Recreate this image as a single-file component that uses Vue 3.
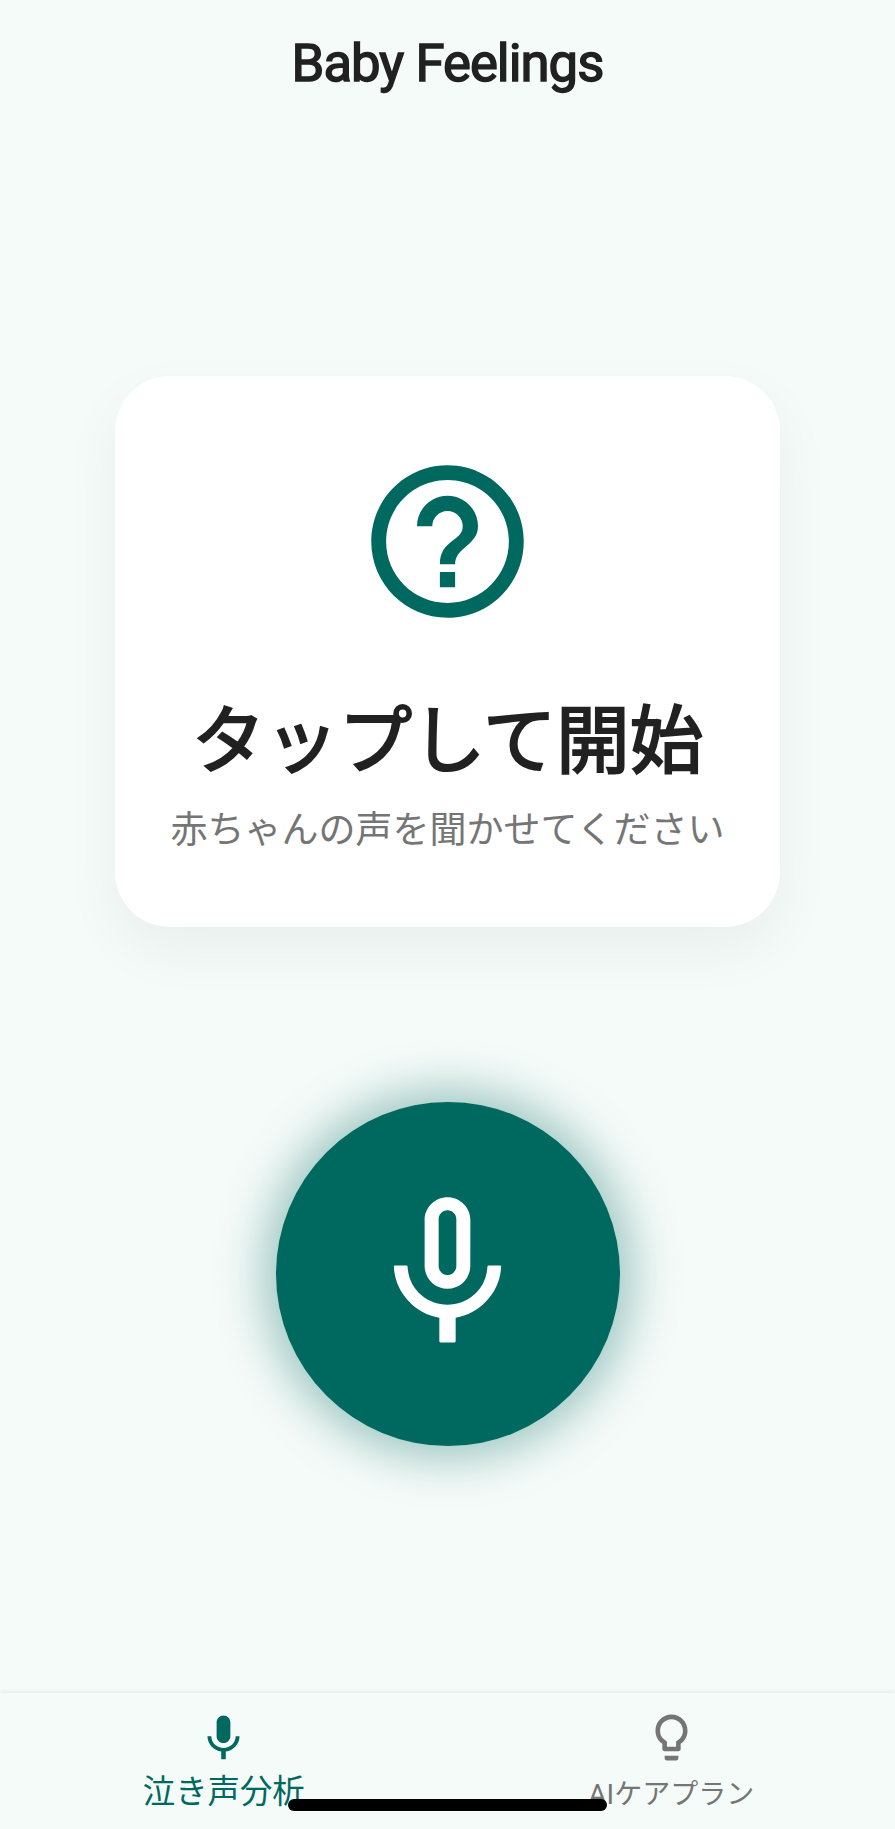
<script setup>
const title = 'Baby Feelings'
const mic = 'M12 14c1.66 0 2.99-1.34 2.99-3L15 5c0-1.66-1.34-3-3-3S9 3.34 9 5v6c0 1.66 1.34 3 3 3z'
const micStand = 'M17.3 11c0 3-2.54 5.1-5.3 5.1S6.7 14 6.7 11H5c0 3.41 2.72 6.23 6 6.72V21h2v-3.28c3.28-.48 6-3.3 6-6.72z'
const roundedStand = 'M17.4 10.95q-.15 0-.17.17C17.1 14.05 14.7 16.1 12 16.1S6.9 14.05 6.77 11.12q-.02-.17-.17-.17H5.1q-.15 0-.13.17C5.1 14.45 7.7 17.25 10.93 17.8V20.9q0 .15.15.15h1.84q.15 0 .15-.15V17.8C16.3 17.25 18.9 14.45 19.03 11.12q.02-.17-.13-.17z'
</script>

<template>
  <div class="screen">
    <header class="bar"><h1>{{ title }}</h1></header>
    <main class="content">
      <section class="card">
        <svg class="big-icon" viewBox="0 0 24 24">
          <path d="M11 18h2v-2h-2v2zm1-16C6.48 2 2 6.48 2 12s4.48 10 10 10 10-4.48 10-10S17.52 2 12 2zm0 18.05c-4.45 0-8.05-3.6-8.05-8.05s3.6-8.05 8.05-8.05 8.05 3.6 8.05 8.05-3.6 8.05-8.05 8.05zm0-14.05c-2.21 0-4 1.79-4 4h2c0-1.1.9-2 2-2s2 .9 2 2c0 2-3 1.75-3 5h2c0-2.25 3-2.5 3-5 0-2.21-1.79-4-4-4z" />
        </svg>
        <h2>タップして開始</h2>
        <p>赤ちゃんの声を聞かせてください</p>
      </section>
      <button class="record" aria-label="録音">
        <svg class="big-icon" viewBox="0 0 24 24">
          <path fill-rule="evenodd" :d="mic + 'M10.84 4.9c0-.66.5-1.2 1.16-1.2s1.16.54 1.16 1.2v6.1c0 .66-.5 1.2-1.16 1.2s-1.16-.54-1.16-1.2z'" />
          <path :d="roundedStand" />
        </svg>
      </button>
    </main>
    <nav class="tabs">
      <div class="tab active">
        <svg viewBox="0 0 24 24"><path :d="mic + micStand" /></svg>
        <span>泣き声分析</span>
      </div>
      <div class="tab">
        <svg viewBox="0 0 24 24">
          <path d="M9 21c0 .55.45 1 1 1h4c.55 0 1-.45 1-1v-1H9v1zm3-19C8.14 2 5 5.14 5 9c0 2.38 1.19 4.47 3 5.74V17c0 .55.45 1 1 1h6c.55 0 1-.45 1-1v-2.26c1.81-1.27 3-3.36 3-5.74 0-3.86-3.14-7-7-7zm2.85 11.1l-.85.6V16h-4v-2.3l-.85-.6A4.997 4.997 0 0 1 7 9c0-2.76 2.24-5 5-5s5 2.24 5 5c0 1.63-.8 3.16-2.15 4.1z" />
        </svg>
        <span>AIケアプラン</span>
      </div>
      <div class="home-indicator"></div>
    </nav>
  </div>
</template>

<style>
body { background: #f5fbf9; }
</style>

<style scoped>
.screen {
  height: 1829px;
  display: flex;
  flex-direction: column;
  overflow: hidden;
  background: #f5fbf9;
  font-family: Roboto, "Noto Sans CJK JP", sans-serif;
}
h1, h2, p { margin: 0; }
.bar {
  height: 125px;
  display: flex;
  align-items: center;
  justify-content: center;
}
h1 {
  font-size: 52.6px;
  line-height: 64px;
  font-weight: 400;
  color: #212121;
  letter-spacing: -0.95px;
  -webkit-text-stroke: 1.5px #212121;
}
.content {
  flex: 1;
  display: flex;
  flex-direction: column;
  align-items: center;
  padding-top: 251px;
}
.card {
  box-sizing: border-box;
  width: 665px;
  height: 551px;
  flex: none;
  padding-top: 74px;
  display: flex;
  flex-direction: column;
  align-items: center;
  border-radius: 55px;
  background: #fff;
  box-shadow: 0 23px 57px rgba(0, 0, 0, 0.05);
  white-space: nowrap;
}
.big-icon {
  width: 183px;
  height: 183px;
  fill: #00695f;
}
h2 {
  margin-top: 56px;
  font-size: 73.3px;
  line-height: 106px;
  font-weight: 400;
  color: #212121;
  -webkit-text-stroke: 2.2px #212121;
}
p {
  margin-top: 9px;
  font-size: 37px;
  line-height: 54px;
  color: #757575;
}
.record {
  width: 344px;
  height: 344px;
  flex: none;
  margin-top: 174.5px;
  padding: 0;
  border: 0;
  border-radius: 50%;
  display: flex;
  align-items: center;
  justify-content: center;
  background: #00695f;
  box-shadow: 0 0 49px 10px rgba(0, 105, 95, 0.4);
}
.record .big-icon { fill: #fff; }
.tabs {
  position: relative;
  height: 136px;
  flex: none;
  display: flex;
  background: #f5fbf9;
  box-shadow: 0 -1px 4px rgba(0, 0, 0, 0.08);
}
.tab {
  flex: 1;
  padding-top: 17px;
  display: flex;
  flex-direction: column;
  align-items: center;
  font-size: 28px;
  line-height: 40px;
  color: #757575;
}
.tab svg {
  width: 55px;
  height: 55px;
  flex: none;
  fill: currentColor;
}
.tab span { margin-top: 10px; }
.tab.active {
  padding-top: 18px;
  font-size: 32.4px;
  color: #00695f;
}
.tab.active span { margin-top: 6px; }
.home-indicator {
  position: absolute;
  left: 288px;
  top: 106px;
  width: 319px;
  height: 12px;
  border-radius: 6px;
  background: #000;
}
</style>
